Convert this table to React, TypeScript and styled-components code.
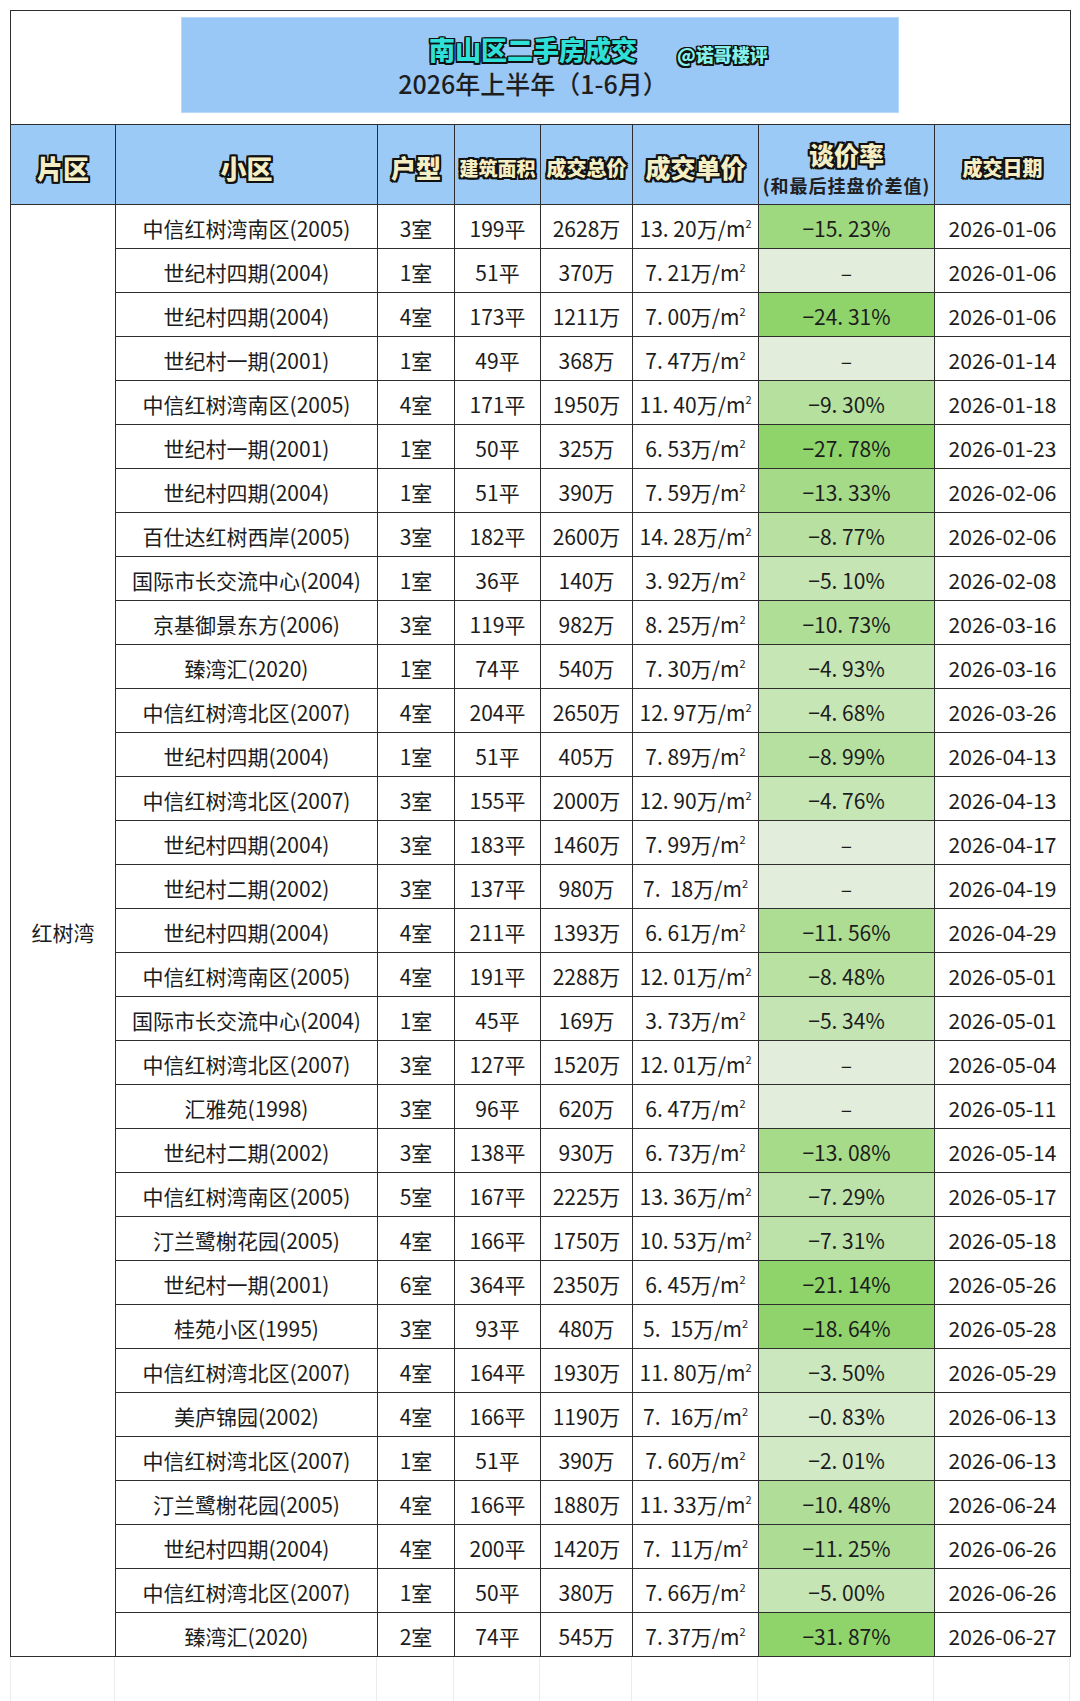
import styled, { createGlobalStyle } from 'styled-components';

const GlobalStyle = createGlobalStyle`
  html, body {
    margin: 0;
    padding: 0;
    background: #ffffff;
  }
  body {
    font-family: "Noto Sans CJK SC", "Noto Sans", sans-serif;
    color: #1c1c1c;
  }
`;

const COLS = [105, 262, 77, 86, 92, 126, 176, 136];
const LINE = '1.5px solid #2e2e2e';

type Deal = {
  name: string;
  room: string;
  area: string;
  total: string;
  price: string;
  rate: number | null;
  date: string;
};

const deals: Deal[] = [
  { name: '中信红树湾南区(2005)', room: '3室', area: '199平', total: '2628万', price: '13. 20', rate: -15.23, date: '2026-01-06' },
  { name: '世纪村四期(2004)', room: '1室', area: '51平', total: '370万', price: '7. 21', rate: null, date: '2026-01-06' },
  { name: '世纪村四期(2004)', room: '4室', area: '173平', total: '1211万', price: '7. 00', rate: -24.31, date: '2026-01-06' },
  { name: '世纪村一期(2001)', room: '1室', area: '49平', total: '368万', price: '7. 47', rate: null, date: '2026-01-14' },
  { name: '中信红树湾南区(2005)', room: '4室', area: '171平', total: '1950万', price: '11. 40', rate: -9.3, date: '2026-01-18' },
  { name: '世纪村一期(2001)', room: '1室', area: '50平', total: '325万', price: '6. 53', rate: -27.78, date: '2026-01-23' },
  { name: '世纪村四期(2004)', room: '1室', area: '51平', total: '390万', price: '7. 59', rate: -13.33, date: '2026-02-06' },
  { name: '百仕达红树西岸(2005)', room: '3室', area: '182平', total: '2600万', price: '14. 28', rate: -8.77, date: '2026-02-06' },
  { name: '国际市长交流中心(2004)', room: '1室', area: '36平', total: '140万', price: '3. 92', rate: -5.1, date: '2026-02-08' },
  { name: '京基御景东方(2006)', room: '3室', area: '119平', total: '982万', price: '8. 25', rate: -10.73, date: '2026-03-16' },
  { name: '臻湾汇(2020)', room: '1室', area: '74平', total: '540万', price: '7. 30', rate: -4.93, date: '2026-03-16' },
  { name: '中信红树湾北区(2007)', room: '4室', area: '204平', total: '2650万', price: '12. 97', rate: -4.68, date: '2026-03-26' },
  { name: '世纪村四期(2004)', room: '1室', area: '51平', total: '405万', price: '7. 89', rate: -8.99, date: '2026-04-13' },
  { name: '中信红树湾北区(2007)', room: '3室', area: '155平', total: '2000万', price: '12. 90', rate: -4.76, date: '2026-04-13' },
  { name: '世纪村四期(2004)', room: '3室', area: '183平', total: '1460万', price: '7. 99', rate: null, date: '2026-04-17' },
  { name: '世纪村二期(2002)', room: '3室', area: '137平', total: '980万', price: '7.  18', rate: null, date: '2026-04-19' },
  { name: '世纪村四期(2004)', room: '4室', area: '211平', total: '1393万', price: '6. 61', rate: -11.56, date: '2026-04-29' },
  { name: '中信红树湾南区(2005)', room: '4室', area: '191平', total: '2288万', price: '12. 01', rate: -8.48, date: '2026-05-01' },
  { name: '国际市长交流中心(2004)', room: '1室', area: '45平', total: '169万', price: '3. 73', rate: -5.34, date: '2026-05-01' },
  { name: '中信红树湾北区(2007)', room: '3室', area: '127平', total: '1520万', price: '12. 01', rate: null, date: '2026-05-04' },
  { name: '汇雅苑(1998)', room: '3室', area: '96平', total: '620万', price: '6. 47', rate: null, date: '2026-05-11' },
  { name: '世纪村二期(2002)', room: '3室', area: '138平', total: '930万', price: '6. 73', rate: -13.08, date: '2026-05-14' },
  { name: '中信红树湾南区(2005)', room: '5室', area: '167平', total: '2225万', price: '13. 36', rate: -7.29, date: '2026-05-17' },
  { name: '汀兰鹭榭花园(2005)', room: '4室', area: '166平', total: '1750万', price: '10. 53', rate: -7.31, date: '2026-05-18' },
  { name: '世纪村一期(2001)', room: '6室', area: '364平', total: '2350万', price: '6. 45', rate: -21.14, date: '2026-05-26' },
  { name: '桂苑小区(1995)', room: '3室', area: '93平', total: '480万', price: '5.  15', rate: -18.64, date: '2026-05-28' },
  { name: '中信红树湾北区(2007)', room: '4室', area: '164平', total: '1930万', price: '11. 80', rate: -3.5, date: '2026-05-29' },
  { name: '美庐锦园(2002)', room: '4室', area: '166平', total: '1190万', price: '7.  16', rate: -0.83, date: '2026-06-13' },
  { name: '中信红树湾北区(2007)', room: '1室', area: '51平', total: '390万', price: '7. 60', rate: -2.01, date: '2026-06-13' },
  { name: '汀兰鹭榭花园(2005)', room: '4室', area: '166平', total: '1880万', price: '11. 33', rate: -10.48, date: '2026-06-24' },
  { name: '世纪村四期(2004)', room: '4室', area: '200平', total: '1420万', price: '7.  11', rate: -11.25, date: '2026-06-26' },
  { name: '中信红树湾北区(2007)', room: '1室', area: '50平', total: '380万', price: '7. 66', rate: -5.0, date: '2026-06-26' },
  { name: '臻湾汇(2020)', room: '2室', area: '74平', total: '545万', price: '7. 37', rate: -31.87, date: '2026-06-27' },
];

// colour scale of the 谈价率 column, light for small discounts, full green from ~19%
function rateColor(rate: number | null): string {
  if (rate === null) return '#e2eddb';
  const t = Math.min(1, Math.abs(rate) / 19);
  const from = [0xd9, 0xec, 0xcf];
  const to = [0x8f, 0xd3, 0x6b];
  const c = from.map((v, i) => Math.round(v + (to[i] - v) * t));
  return `rgb(${c[0]}, ${c[1]}, ${c[2]})`;
}

function formatRate(rate: number): string {
  const [a, b] = Math.abs(rate).toFixed(2).split('.');
  return `−${a}. ${b}%`;
}

const Page = styled.div`
  padding: 10px 10px 0 10px;
`;

const Sheet = styled.table`
  width: 1060px;
  table-layout: fixed;
  border-collapse: collapse;
  border: ${LINE};
`;

const TitleCell = styled.td`
  height: 113px;
  padding: 0;
  border: ${LINE};
  vertical-align: top;
`;

const Banner = styled.div`
  margin: 6px 0 0 170px;
  width: 718px;
  height: 96px;
  box-sizing: border-box;
  padding: 14px 14px 0 0;
  background: #99c8f7;
  border: 1px solid #b7d9fa;
  display: flex;
  flex-direction: column;
  align-items: center;
`;

const TitleLine = styled.div`
  display: grid;
  grid-template-columns: 1fr auto 1fr;
  width: 100%;
  align-items: center;
`;

const outline = (w: number) =>
  [
    `${w}px 0 0 #111`,
    `-${w}px 0 0 #111`,
    `0 ${w}px 0 #111`,
    `0 -${w}px 0 #111`,
    `${w}px ${w}px 0 #111`,
    `-${w}px ${w}px 0 #111`,
    `${w}px -${w}px 0 #111`,
    `-${w}px -${w}px 0 #111`,
  ].join(', ');

const MainTitle = styled.span`
  grid-column: 2;
  font-size: 26px;
  line-height: 34px;
  font-weight: 900;
  color: #2fe0d8;
  text-shadow: ${outline(1.5)};
`;

const Tag = styled.span`
  grid-column: 3;
  justify-self: start;
  margin: 10px 0 0 40px;
  font-size: 18px;
  line-height: 22px;
  font-weight: 900;
  color: #86f0ea;
  text-shadow: ${outline(1.5)};
`;

const SubTitle = styled.div`
  margin-top: 1px;
  font-size: 25px;
  line-height: 32px;
  font-weight: 500;
  color: #1e1e1e;
`;

const HeadCell = styled.th<{ $size: number }>`
  height: 74px;
  padding: 5px 0 0 0;
  border: ${LINE};
  background: #9bcaf7;
  font-size: ${(p) => p.$size}px;
  font-weight: 900;
  color: #f4eec4;
  text-shadow: ${outline(2)};
  white-space: nowrap;
  overflow: hidden;
`;

const HeadStack = styled.div`
  display: flex;
  flex-direction: column;
  align-items: center;
  gap: 0;
`;

const HeadNote = styled.span`
  font-size: 18px;
  line-height: 26px;
  font-weight: 700;
  color: #202020;
  text-shadow: none;
  letter-spacing: 1px;
`;

const Cell = styled.td<{ $bg?: string }>`
  height: 44px;
  padding: 3px 0 0 0;
  box-sizing: border-box;
  border: ${LINE};
  text-align: center;
  font-size: 21px;
  line-height: 24px;
  white-space: pre;
  overflow: hidden;
  background: ${(p) => p.$bg ?? '#ffffff'};
`;

const AreaCell = styled(Cell)`
  vertical-align: middle;
`;

const Sup = styled.sup`
  font-size: 11px;
  vertical-align: 9px;
  line-height: 0;
`;

const Filler = styled.div`
  display: grid;
  grid-template-columns: ${COLS.map((c) => `${c}px`).join(' ')};
  width: 1060px;
  height: 49px;
`;

const FillerCol = styled.div<{ $first?: boolean }>`
  border-right: 1px solid #ececec;
  border-left: ${(p) => (p.$first ? '1px solid #ececec' : 'none')};
`;

export default function App() {
  return (
    <Page>
      <GlobalStyle />
      <Sheet>
        <colgroup>
          {COLS.map((w, i) => (
            <col key={`col-${i}`} style={{ width: w }} />
          ))}
        </colgroup>
        <tbody>
          <tr>
            <TitleCell colSpan={8}>
              <Banner>
                <TitleLine>
                  <MainTitle>南山区二手房成交</MainTitle>
                  <Tag>@诺哥楼评</Tag>
                </TitleLine>
                <SubTitle>2026年上半年（1-6月）</SubTitle>
              </Banner>
            </TitleCell>
          </tr>
          <tr>
            <HeadCell $size={26}>片区</HeadCell>
            <HeadCell $size={26}>小区</HeadCell>
            <HeadCell $size={25}>户型</HeadCell>
            <HeadCell $size={19}>建筑面积</HeadCell>
            <HeadCell $size={20}>成交总价</HeadCell>
            <HeadCell $size={25}>成交单价</HeadCell>
            <HeadCell $size={25}>
              <HeadStack>
                <span>谈价率</span>
                <HeadNote>(和最后挂盘价差值)</HeadNote>
              </HeadStack>
            </HeadCell>
            <HeadCell $size={20}>成交日期</HeadCell>
          </tr>
          {deals.map((d, i) => (
            <tr key={`deal-${i}`}>
              {i === 0 && <AreaCell rowSpan={deals.length}>红树湾</AreaCell>}
              <Cell>{d.name}</Cell>
              <Cell>{d.room}</Cell>
              <Cell>{d.area}</Cell>
              <Cell>{d.total}</Cell>
              <Cell>
                {d.price}万/m<Sup>2</Sup>
              </Cell>
              <Cell $bg={rateColor(d.rate)}>
                {d.rate === null ? '–' : formatRate(d.rate)}
              </Cell>
              <Cell>{d.date}</Cell>
            </tr>
          ))}
        </tbody>
      </Sheet>
      <Filler>
        {COLS.map((_, i) => (
          <FillerCol key={`fill-${i}`} $first={i === 0} />
        ))}
      </Filler>
    </Page>
  );
}
